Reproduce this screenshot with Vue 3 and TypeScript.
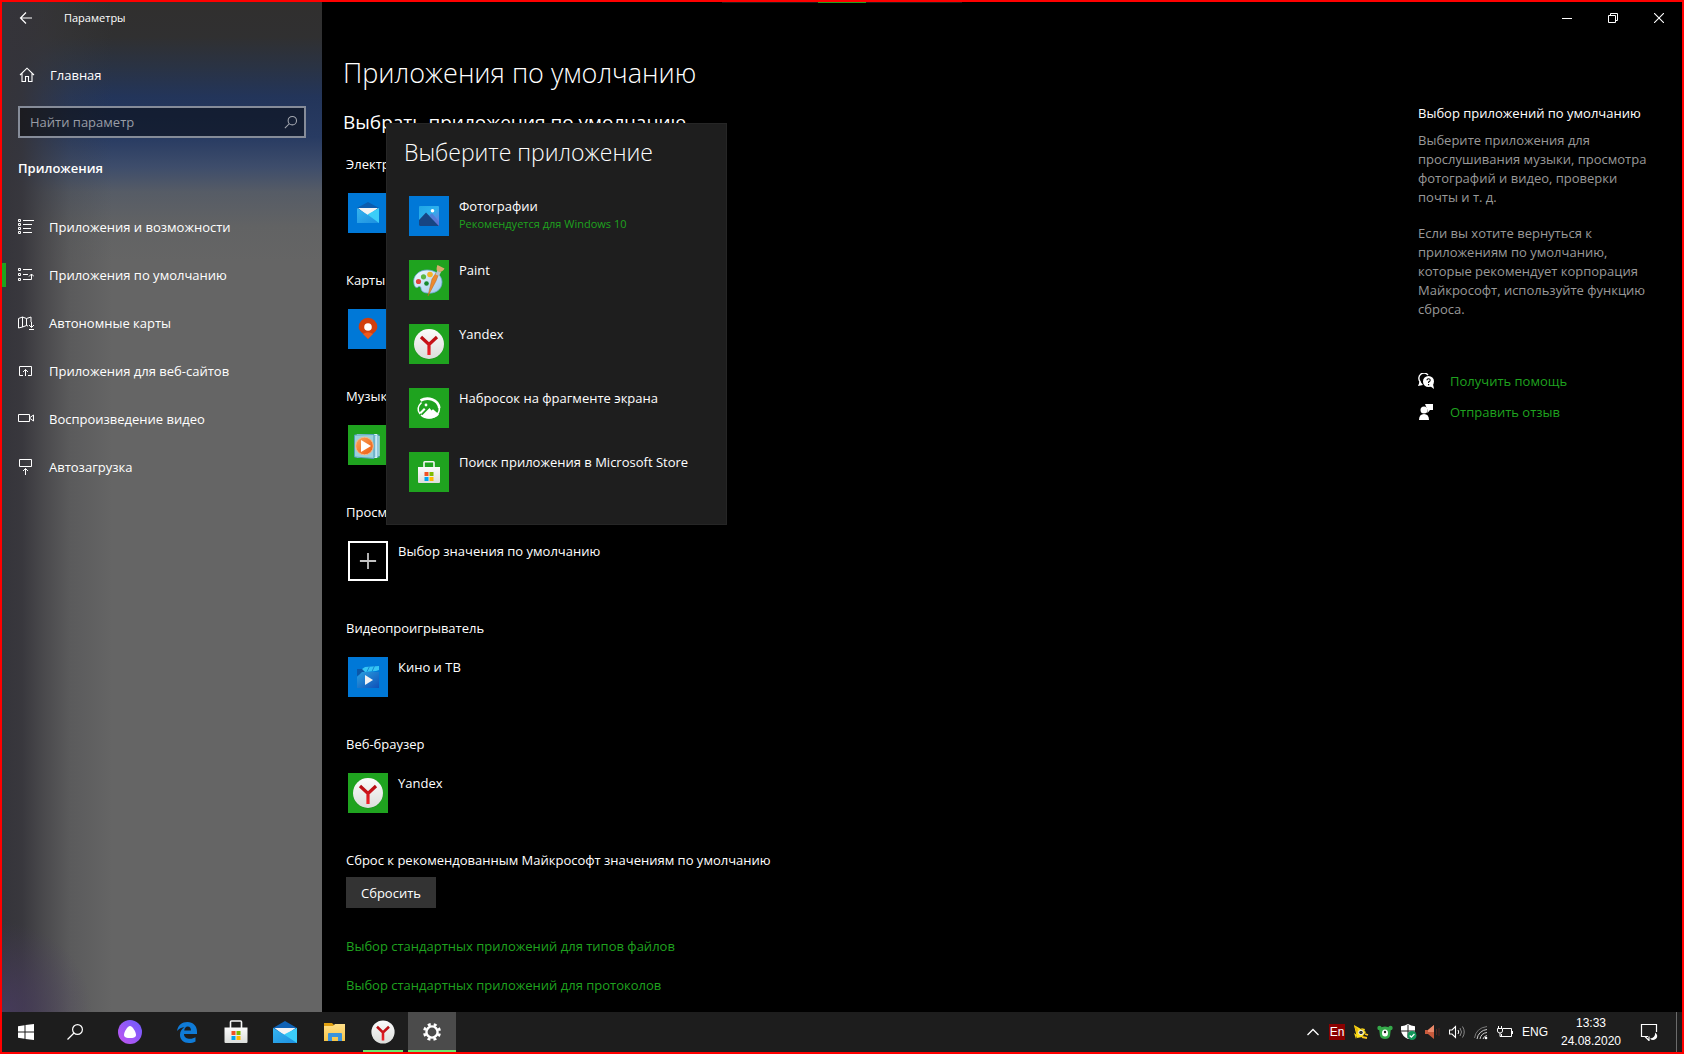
<script setup lang="ts">
import { ref } from 'vue'

interface NavItem { icon: string; label: string; active?: boolean }
interface Category { title: string; app: string; icon: string; tile: 'blue' | 'green' | 'empty' }
interface Choice { name: string; note?: string; icon: string; tile: 'blue' | 'green' }
interface Pinned { icon: string; label: string; size: number; state?: 'running' | 'active'; wide?: boolean }

const query = ref('')

const nav: NavItem[] = [
  { icon: 'n-features', label: 'Приложения и возможности' },
  { icon: 'n-defaults', label: 'Приложения по умолчанию', active: true },
  { icon: 'n-maps', label: 'Автономные карты' },
  { icon: 'n-web', label: 'Приложения для веб-сайтов' },
  { icon: 'n-video', label: 'Воспроизведение видео' },
  { icon: 'n-startup', label: 'Автозагрузка' },
]

const categories: Category[] = [
  { title: 'Электронная почта', app: 'Почта', icon: 'a-mail', tile: 'blue' },
  { title: 'Карты', app: 'Карты', icon: 'a-maps', tile: 'blue' },
  { title: 'Музыкальный проигрыватель', app: 'Windows Media', icon: 'a-wmp', tile: 'green' },
  { title: 'Просмотр фотографий', app: 'Выбор значения по умолчанию', icon: 'a-plus', tile: 'empty' },
  { title: 'Видеопроигрыватель', app: 'Кино и ТВ', icon: 'a-movies', tile: 'blue' },
  { title: 'Веб-браузер', app: 'Yandex', icon: 'a-yandex', tile: 'green' },
]

const choices: Choice[] = [
  { name: 'Фотографии', note: 'Рекомендуется для Windows 10', icon: 'a-photos', tile: 'blue' },
  { name: 'Paint', icon: 'a-paint', tile: 'green' },
  { name: 'Yandex', icon: 'a-yandex', tile: 'green' },
  { name: 'Набросок на фрагменте экрана', icon: 'a-snip', tile: 'green' },
  { name: 'Поиск приложения в Microsoft Store', icon: 'a-store', tile: 'green' },
]

const pinned: Pinned[] = [
  { icon: 't-start', label: 'Пуск', size: 16 },
  { icon: 't-search', label: 'Поиск', size: 16 },
  { icon: 't-alice', label: 'Алиса', size: 24, wide: true },
  { icon: 't-edge', label: 'Edge', size: 22 },
  { icon: 't-store', label: 'Store', size: 24 },
  { icon: 't-mail', label: 'Почта', size: 24 },
  { icon: 't-folder', label: 'Проводник', size: 24 },
  { icon: 't-yandex', label: 'Yandex', size: 24, state: 'running' },
  { icon: 't-gear', label: 'Параметры', size: 20, state: 'active' },
]

const tray = ['y-rocket', 'y-bear', 'y-shield', 'y-horn', 'y-volume', 'y-wifi', 'y-battery']
</script>

<template>
  <div class="screen">
    <svg class="sprite" aria-hidden="true">
      <defs>
        <linearGradient id="gWhite" x1="0" y1="0" x2="0" y2="1"><stop offset="0" stop-color="#fbfbfb" /><stop offset="1" stop-color="#dcdedb" /></linearGradient>
        <linearGradient id="gRed" x1="0" y1="0" x2="0" y2="1"><stop offset="0" stop-color="#b50d12" /><stop offset="1" stop-color="#f5222a" /></linearGradient>
        <linearGradient id="gAlice" x1="1" y1="0" x2="0" y2="1"><stop offset="0" stop-color="#6a5cff" /><stop offset="1" stop-color="#c455f0" /></linearGradient>
        <linearGradient id="gPhoto" x1="0" y1="0" x2="1" y2="1"><stop offset="0" stop-color="#1fa6e6" /><stop offset=".5" stop-color="#2cb0ee" /><stop offset="1" stop-color="#7a6fd8" /></linearGradient>
        <linearGradient id="gMovie" x1="0" y1="0" x2="1" y2="1"><stop offset="0" stop-color="#2aa0e0" /><stop offset="1" stop-color="#0f50b8" /></linearGradient>
        <linearGradient id="gMail" x1="0" y1="0" x2="1" y2="1"><stop offset="0" stop-color="#35b4ee" /><stop offset="1" stop-color="#1c8fe0" /></linearGradient>
        <linearGradient id="gFolder" x1="0" y1="0" x2="0" y2="1"><stop offset="0" stop-color="#ffe08a" /><stop offset="1" stop-color="#f8c546" /></linearGradient>
        <linearGradient id="gPal" x1="0" y1="0" x2="1" y2="1"><stop offset="0" stop-color="#f4fbff" /><stop offset="1" stop-color="#9cc9ec" /></linearGradient>
        <linearGradient id="gOrange" x1="0" y1="0" x2="1" y2="1"><stop offset="0" stop-color="#f9a45c" /><stop offset="1" stop-color="#ee5a0c" /></linearGradient>
      </defs>

      <!-- sidebar -->
      <symbol id="n-home" viewBox="0 0 16 16"><path d="M1 8 8 1.2 15 8M3 6.5V14.5H6.5V9.5H9.5V14.5H13V6.5" fill="none" stroke="#fff" stroke-width="1.1" /></symbol>
      <symbol id="n-features" viewBox="0 0 16 16"><g fill="none" stroke="#fff"><path d="M5 1.5H16M5 5.5H14M5 9.5H13M5 13.5H14" /><path d="M.5.5h2v2h-2zM.5 4.5h2v2h-2zM.5 8.5h2v2h-2zM.5 12.5h2v2h-2z" /></g></symbol>
      <symbol id="n-defaults" viewBox="0 0 16 16"><g fill="none" stroke="#fff"><path d="M5 2.5H14M5 7.5H10M5 12.5H13.5V7M11 9.5l2.5-2.5L16 9.5" /><path d="M.5 1.5h2v2h-2zM.5 6.5h2v2h-2zM.5 11.5h2v2h-2z" /></g></symbol>
      <symbol id="n-maps" viewBox="0 0 16 16"><path d="M10 11 8.500 10.500 4.500 12 .5 13V3.500L4.500 2 8.500 3.500 13 2V7M4.500 2V12M8.500 3.500V10.500M13.500 7V12.500M11 10l2.500 2.500L16 10M11 14.500H16" fill="none" stroke="#fff" /></symbol>
      <symbol id="n-web" viewBox="0 0 16 16"><path d="M5 12.500H1.500V3.500H13.500V12.500H10M7.500 13V6.500M5 9l2.500-2.500L10 9" fill="none" stroke="#fff" /></symbol>
      <symbol id="n-video" viewBox="0 0 16 16"><path d="M.5 3.500H11.500V10.500H.5zM12 6.500 15.500 4V10L12 7.500" fill="none" stroke="#fff" /></symbol>
      <symbol id="n-startup" viewBox="0 0 16 16"><path d="M1.500.5H13.500V7.500H1.500zM7.500 16V9.500M5 12l2.500-2.500L10 12" fill="none" stroke="#fff" /></symbol>
      <symbol id="n-search" viewBox="0 0 16 16"><circle cx="9.500" cy="6.500" r="4.800" fill="none" stroke="currentColor" stroke-width="1.200" /><path d="M6 10 1 15" stroke="currentColor" stroke-width="1.200" /></symbol>

      <!-- application tiles, drawn on a 40 unit square -->
      <symbol id="a-mail" viewBox="0 0 40 40"><path d="M9 15 20 9l11 6v4H9z" fill="#0b5cae" /><path d="M10 15h20l-10 8z" fill="#f4f4f4" /><path d="M9 15l11 7 11-7v15H9z" fill="url(#gMail)" /><path d="M31 15v15L19.500 21.500z" fill="#3bcdf8" /></symbol>
      <symbol id="a-maps" viewBox="0 0 40 40"><path d="M20 30c-3-5-9.300-7-9.300-12a9.300 9.300 0 0 1 18.600 0c0 5-6.300 7-9.300 12z" fill="#d13f0d" /><path d="M15 25a9 9 0 0 1 10 0l-5 5z" fill="#f0591d" /><circle cx="20" cy="18" r="3.800" fill="#fff" /></symbol>
      <symbol id="a-wmp" viewBox="0 0 40 40"><path d="M12 9.500h19.500v23H12z" fill="#4d9dba" /><path d="M9 9.500h20v23H9z" fill="#8cc7de" stroke="#d4f0fa" /><path d="M6.500 10 26 9.500v24L6.500 32z" fill="#9bd0da" stroke="#4f9fb8" /><path d="M28 11v21M31 11v20" stroke="#dff5fb" /><circle cx="16.500" cy="21" r="8.800" fill="url(#gOrange)" stroke="#f5b88a" /><path d="M13 15v12l10-6z" fill="#fff" /></symbol>
      <symbol id="a-plus" viewBox="0 0 40 40"><path d="M20 11V29M11 20H29" stroke="#c4c4c4" stroke-width="2" /></symbol>
      <symbol id="a-movies" viewBox="0 0 40 40"><path d="M9 12h5l3-1.500V16l-8 3z" fill="#0b57a8" /><path d="M14 12l3-2 14-1v4l-3 1-11 1z" fill="#35c5f4" /><path d="M21.500 9.500l-2.500 5M26.500 9l-2.500 5.500" stroke="#1787d0" /><path d="M9 31V20l5-5h17v16z" fill="url(#gMovie)" /><path d="M17 18v10l8-5z" fill="#f2f2f2" /></symbol>
      <symbol id="a-yandex" viewBox="0 0 40 40"><circle cx="20" cy="20.500" r="15" fill="#157a15" opacity=".5" /><circle cx="20" cy="20" r="15" fill="url(#gWhite)" /><path d="M12 13l8 7.500 8-7.500M20 20v11" fill="none" stroke="url(#gRed)" stroke-width="3.200" /></symbol>
      <symbol id="a-photos" viewBox="0 0 40 40"><rect x="10" y="10" width="20" height="20" rx="1" fill="url(#gPhoto)" /><path d="M10 24l7-7.500 13 13.500H11q-1 0-1-1z" fill="#174583" /><path d="M20 19.500 23 17l7 9v4z" fill="#5b6dd0" opacity=".7" /><circle cx="23.500" cy="14.800" r="1.800" fill="#fff" /></symbol>
      <symbol id="a-paint" viewBox="0 0 40 40"><path d="M5 24C3 16 10 10 18 10c9 0 15 6 15 12 0 8-7 12-15 11-5-.6-6-3-6-5 0-1.500-2-2-3-1-1.500 1.500-3.500 0-4-3z" fill="url(#gPal)" stroke="#6fa7d4" stroke-width=".8" /><circle cx="9.500" cy="21.500" r="2.600" fill="#e0463e" /><circle cx="14.500" cy="16.800" r="2.600" fill="#5cb845" /><circle cx="21" cy="14.500" r="2.800" fill="#f4b42a" /><circle cx="17.500" cy="23.500" r="2.300" fill="#16892d" /><path d="M29.500 14.500 27 21 19 36 23 19l4-6z" fill="#ec8a2e" stroke="#b86518" stroke-width=".5" /><path d="M26.500 14.500l3.500 1.500 2-4-3.500-2z" fill="#b9c4cc" /><path d="M28 11c-1-2 0-5 .5-6l7 3.500c-1 2-3 3.500-5 3.500z" fill="#d9ab6e" /></symbol>
      <symbol id="a-snip" viewBox="0 0 40 40"><path d="M11.500 12.500C19 8.500 29 11.500 30.300 20" fill="none" stroke="#fff" stroke-width="2.600" /><path d="M12.500 14.500C8 19 8.500 23 11 26M30.300 19c.8 5-3 11-10.300 11-3 0-6-1-8-3" fill="none" stroke="#fff" stroke-width="1.500" /><path d="M13 27.500 20.500 20l2 2.500 1.500-1.200 6 5.200c-2 2.500-5.500 4-10 4-3 0-5.500-1-7-3z" fill="#fff" /><path d="M10.500 24.500l4.500-4.500 1.500 1.500-4.500 4.500z" fill="#fff" /><circle cx="17" cy="17" r="1.400" fill="#fff" /></symbol>
      <symbol id="a-store" viewBox="0 0 40 40"><path d="M15 15v-4.500q0-.8.8-.8h8.400q.8 0 .8.8V15" fill="none" stroke="#f5f5f5" stroke-width="1.600" /><path d="M9 15H31V30q0 1-1 1H10q-1 0-1-1z" fill="url(#gWhite)" /><path d="M15.500 20h4v4h-4z" fill="#f25022" /><path d="M20.500 20h4v4h-4z" fill="#7fba00" /><path d="M15.500 25h4v4h-4z" fill="#00a4ef" /><path d="M20.500 25h4v4h-4z" fill="#ffb900" /></symbol>

      <!-- help links -->
      <symbol id="h-help" viewBox="0 0 16 16"><path d="M2 12V8.500a5 5 0 0 1 8-6.500" fill="none" stroke="#fff" stroke-width="1.400" /><path d="M0 13 2 8l3 4z" fill="#fff" /><circle cx="10.500" cy="8.500" r="5.500" fill="#fff" /><path d="M12 13l3-2 1 5z" fill="#fff" /><path d="M9 7.300q0-1.600 1.600-1.600T12.200 7.200q0 1-1.600 1.900V10M10.600 11v1.200" fill="none" stroke="#000" stroke-width="1.100" /></symbol>
      <symbol id="h-feedback" viewBox="0 0 16 16"><circle cx="6" cy="6" r="3.500" fill="#fff" /><path d="M1 16q0-6 5-6t5 6zM7 0h8v6h-3l-2.500 3V6z" fill="#fff" /></symbol>

      <!-- taskbar -->
      <symbol id="t-start" viewBox="0 0 16 16"><path d="M0 2.200 6.500 1.300V7.500H0zM7.500 1.100 16 0V7.500H7.500zM0 8.500H6.500V14.700L0 13.800zM7.500 8.500H16V16L7.500 14.900z" fill="#fff" /></symbol>
      <symbol id="t-search" viewBox="0 0 16 16"><circle cx="10.500" cy="5.500" r="4.900" fill="none" stroke="#fff" stroke-width="1.200" /><path d="M7 9 .5 15.500" stroke="#fff" stroke-width="1.300" /></symbol>
      <symbol id="t-alice" viewBox="0 0 24 24"><circle cx="12" cy="12" r="12" fill="url(#gAlice)" /><path d="M12 6c2.500 0 6 6 6 9 0 2.500-3 3-6 3s-6-.5-6-3c0-3 3.500-9 6-9z" fill="#fff" /></symbol>
      <symbol id="t-edge" viewBox="0 0 22 22"><path d="M1 10C2 4 6 1 11.500 1 17 1 21 5 21 10.500V13H8c0 3.500 3 4.800 6 4.800 2.200 0 4-.6 5.500-1.500v4.200C17.500 21.500 15.500 22 13 22 7.500 22 4 18.500 4 14c0-4 2-6.500 4.500-7.800C5.500 6.500 3 7.500 1 10zM8.200 9.500H15c0-2.200-1-4-3.300-4-2 0-3.200 1.700-3.500 4z" fill="#0f7bd7" /></symbol>
      <symbol id="t-store" viewBox="0 0 24 24"><path d="M6.500 8V2q0-1 1-1h9q1 0 1 1V8" fill="none" stroke="#f5f5f5" stroke-width="1.600" /><path d="M.5 7.500h23V22q0 1-1 1h-21q-1 0-1-1z" fill="url(#gWhite)" /><path d="M7.500 11h4v4h-4z" fill="#f25022" /><path d="M12.500 11h4v4h-4z" fill="#7fba00" /><path d="M7.500 16h4v4h-4z" fill="#00a4ef" /><path d="M12.500 16h4v4h-4z" fill="#ffb900" /></symbol>
      <symbol id="t-mail" viewBox="0 0 24 24"><path d="M0 8 12 1l12 7v5H0z" fill="#0f62b5" /><path d="M1.500 8h21L12 16z" fill="#f4f4f4" /><path d="M0 8l12 7 12-7v15H0z" fill="url(#gMail)" /><path d="M24 8v15L11 14.500z" fill="#3bcdf8" /></symbol>
      <symbol id="t-folder" viewBox="0 0 24 24"><path d="M2 3h8l2 2h11v6H2z" fill="#e0a010" /><path d="M2 6h9l2-2h10v17H2z" fill="url(#gFolder)" /><path d="M6 21v-7q0-1 1-1h12q1 0 1 1v7h-4v-4h-6v4z" fill="#3b93dc" /></symbol>
      <symbol id="t-yandex" viewBox="0 0 30 30"><circle cx="15" cy="15" r="14.500" fill="url(#gWhite)" /><path d="M7.500 8.500l7.500 7 7.500-7M15 15v10.500" fill="none" stroke="url(#gRed)" stroke-width="3.200" /></symbol>
      <symbol id="t-gear" viewBox="0 0 20 20"><circle cx="10" cy="10" r="5.600" fill="none" stroke="#fff" stroke-width="2.400" /><circle cx="10" cy="10" r="7.700" fill="none" stroke="#fff" stroke-width="2.600" stroke-dasharray="3 3.048" stroke-dashoffset="-1.500" /></symbol>

      <!-- notification area -->
      <symbol id="y-rocket" viewBox="0 0 16 16"><path d="M1 1l7 4 5 3-4 5-5 1z" fill="#ffe01a" /><path d="M1 1l3 9 1-5z" fill="#e8b80c" /><circle cx="8" cy="8.500" r="2.300" fill="#333" stroke="#fff" /><path d="M1 9l3 2-1 4zM8 4l4 1-1 3z" fill="#ffd91a" /><path d="M9 13l5 1M12 10l3 1" stroke="#ffc61e" stroke-width="1.800" /></symbol>
      <symbol id="y-bear" viewBox="0 0 16 16"><circle cx="2.500" cy="4" r="2.200" fill="#35a94a" /><circle cx="13.500" cy="4" r="2.200" fill="#35a94a" /><path d="M2 4q6-3 12 0l-1 8q-1 3-5 3t-5-3z" fill="#35a94a" /><ellipse cx="8" cy="9" rx="3" ry="3.500" fill="#fff" /><circle cx="8" cy="8" r="1.200" fill="#222" /></symbol>
      <symbol id="y-shield" viewBox="0 0 16 16"><path d="M7 0Q10 2 14 2.300V7Q13 12 7 15 1 12 0 7V2.300Q4 2 7 0z" fill="#fff" /><path d="M7 1V14M0 7H14" stroke="#1d1d1d" /><circle cx="11" cy="11.500" r="4.500" fill="#12965a" /><path d="M8.700 11.500l1.700 1.700 3-3.200" fill="none" stroke="#fff" stroke-width="1.200" /></symbol>
      <symbol id="y-horn" viewBox="0 0 16 16"><path d="M0 6h3l6-5v14l-6-5H0z" fill="#c85a3c" /><path d="M3 6l6-5v7H3z" fill="#e9896a" /><path d="M11.500 5v6M14 4v8" stroke="#4c2722" /></symbol>
      <symbol id="y-volume" viewBox="0 0 16 16"><path d="M.5 6H3L6.500 2.500V13.500L3 10H.5z" fill="none" stroke="#fff" stroke-width="1.100" /><path d="M9 6q1.500 2 0 4" fill="none" stroke="#fff" /><path d="M11 4q3 4 0 8M13.500 2.500q3.500 5.500 0 11" fill="none" stroke="#888" /></symbol>
      <symbol id="y-wifi" viewBox="0 0 16 16"><g fill="none" stroke="#cfcfcf"><path d="M4 15A11 11 0 0 1 14 5.500M7 15A8 8 0 0 1 14 8.500M10 15A5 5 0 0 1 14 11.500" /></g><path d="M1.500 14Q3 4 14 2.500" fill="none" stroke="#777" /><circle cx="13" cy="14" r="1.300" fill="#fff" /></symbol>
      <symbol id="y-battery" viewBox="0 0 16 16"><path d="M6 4.500H14.500V12.500H4.500V10M15.500 7V10" fill="none" stroke="#fff" /><path d="M.5 4.500h5V7q0 2-2.500 2T.5 7zM1.500 2v2M4.500 2v2M3 9v3.500h2" fill="none" stroke="#fff" /></symbol>
      <symbol id="y-note" viewBox="0 0 18 18"><path d="M8 13.500H1.500V1.500H16.500V9M5 13.500 9 17.500V13.500" fill="none" stroke="#fff" stroke-width="1.200" /><path d="M15 9.500a4 4 0 1 1-5 6A5 5 0 0 0 15 9.500z" fill="#fff" /></symbol>
    </svg>

    <div class="bar-edge" aria-hidden="true"><i></i></div>

    <div class="window">
      <aside class="sidebar">
        <header class="side-title">
          <button class="back" type="button" aria-label="Назад">
            <svg width="14" height="14" viewBox="0 0 14 14"><path d="M13 7H1.500M7 1.500 1.500 7 7 12.500" fill="none" stroke="#fff" stroke-width="1.200" /></svg>
          </button>
          <span>Параметры</span>
        </header>
        <a class="home" href="#"><svg width="16" height="16"><use href="#n-home" /></svg>Главная</a>
        <div class="search">
          <input v-model="query" type="text" placeholder="Найти параметр" aria-label="Найти параметр" />
          <svg width="14" height="14"><use href="#n-search" /></svg>
        </div>
        <h2 class="side-heading">Приложения</h2>
        <nav>
          <a v-for="item in nav" :key="item.icon" href="#" :class="{ active: item.active }">
            <svg width="16" height="16"><use :href="'#' + item.icon" /></svg>{{ item.label }}
          </a>
        </nav>
      </aside>

      <main class="main">
        <div class="controls">
          <button type="button" aria-label="Свернуть"><svg width="10" height="10"><path d="M0 5.500H10" stroke="#fff" /></svg></button>
          <button type="button" aria-label="Развернуть"><svg width="10" height="10"><path d="M.5 2.500h7v7h-7zM2.500 2.500v-2h7v7h-2" fill="none" stroke="#fff" /></svg></button>
          <button type="button" aria-label="Закрыть"><svg width="10" height="10"><path d="M0 0l10 10M10 0L0 10" stroke="#fff" stroke-width="1.100" /></svg></button>
        </div>

        <div class="columns">
          <section class="content">
            <h1>Приложения по умолчанию</h1>
            <h2>Выбрать приложения по умолчанию</h2>
            <div class="list">
              <div v-for="c in categories" :key="c.title" class="category">
                <h3>{{ c.title }}</h3>
                <button class="app" type="button">
                  <svg class="tile" :class="c.tile" width="40" height="40"><use :href="'#' + c.icon" /></svg>
                  <span>{{ c.app }}</span>
                </button>
              </div>
              <h3>Сброс к рекомендованным Майкрософт значениям по умолчанию</h3>
              <button class="reset" type="button">Сбросить</button>
              <a class="more" href="#">Выбор стандартных приложений для типов файлов</a>
              <a class="more" href="#">Выбор стандартных приложений для протоколов</a>
            </div>
          </section>

          <aside class="help">
            <h3>Выбор приложений по умолчанию</h3>
            <p>Выберите приложения для прослушивания музыки, просмотра фотографий и видео, проверки почты и т. д.</p>
            <p>Если вы хотите вернуться к приложениям по умолчанию, которые рекомендует корпорация Майкрософт, используйте функцию сброса.</p>
            <div class="help-links">
              <a href="#"><svg width="16" height="16"><use href="#h-help" /></svg>Получить помощь</a>
              <a href="#"><svg width="16" height="16"><use href="#h-feedback" /></svg>Отправить отзыв</a>
            </div>
          </aside>
        </div>

        <div class="picker" role="dialog" aria-labelledby="picker-title">
          <h2 id="picker-title">Выберите приложение</h2>
          <button v-for="c in choices" :key="c.name" class="choice" type="button">
            <svg class="tile" :class="c.tile" width="40" height="40"><use :href="'#' + c.icon" /></svg>
            <span class="choice-text"><span>{{ c.name }}</span><small v-if="c.note">{{ c.note }}</small></span>
          </button>
        </div>
      </main>
    </div>

    <footer class="taskbar">
      <div class="pinned">
        <button v-for="p in pinned" :key="p.icon" type="button" :aria-label="p.label" :class="[p.state, { wide: p.wide }]">
          <svg :width="p.size" :height="p.size"><use :href="'#' + p.icon" /></svg>
        </button>
      </div>
      <div class="tray">
        <span class="slot"><svg width="12" height="8"><path d="M.5 7 6 1.500 11.500 7" fill="none" stroke="#fff" stroke-width="1.300" /></svg></span>
        <span class="slot"><b class="lang-badge">En</b></span>
        <span v-for="t in tray" :key="t" class="slot"><svg width="16" height="16"><use :href="'#' + t" /></svg></span>
        <span class="lang">ENG</span>
        <time class="clock" datetime="2020-08-24T13:33"><span>13:33</span><span>24.08.2020</span></time>
        <button class="notes" type="button" aria-label="Уведомления"><svg width="18" height="18"><use href="#y-note" /></svg></button>
        <button class="desktop" type="button" aria-label="Свернуть все окна"></button>
      </div>
    </footer>
  </div>
</template>

<style>
body { background: #000; }
</style>

<style scoped>
* { box-sizing: border-box; margin: 0; padding: 0; }
.screen {
  position: relative;
  display: flex;
  flex-direction: column;
  min-height: 100vh;
  border: 2px solid #f00;
  background: #000;
  color: #fff;
  font: 13px/20px "Open Sans", "Noto Sans", sans-serif;
}
.sprite { position: absolute; width: 0; height: 0; }
.bar-edge { position: absolute; top: 0; left: 50%; width: 240px; height: 1px; margin-left: -120px; background: #1c1c1c; }
.bar-edge i { display: block; width: 48px; height: 1px; margin: 0 auto; background: #1fa31f; }
button { border: 0; background: none; color: inherit; font: inherit; text-align: left; }
a { color: inherit; text-decoration: none; }
svg { display: block; flex: none; }
h1, h2, h3 { font-weight: 400; }

.window { display: flex; flex: 1; }
.sidebar {
  flex: none;
  width: 320px;
  background:
    radial-gradient(90px 90px at 0 100%, rgba(74, 60, 98, .8), transparent),
    linear-gradient(to right, #35343a 0, rgba(53, 52, 58, .92) 20px, rgba(56, 55, 60, .6) 42px, rgba(60, 60, 64, .25) 68px, transparent 110px),
    linear-gradient(to bottom, #302f2e 0, #303031 35px, #2a3344 65px, #23355a 95px, #283b62 135px, #3e4d6b 165px, #565c66 190px, #626364 225px, #656565 260px);
}
.side-title { display: flex; align-items: center; height: 32px; font-size: 11px; }
.back { display: flex; justify-content: center; width: 48px; margin-right: 14px; }
.home { display: flex; align-items: center; gap: 15px; height: 40px; margin-top: 21px; padding-left: 17px; }
.search {
  display: flex;
  align-items: center;
  height: 32px;
  margin: 11px 16px 0;
  padding-right: 6px;
  border: 2px solid #868c99;
  background: rgba(0, 0, 0, .45);
  color: #a5a9b1;
}
.search input { flex: 1; min-width: 0; padding-left: 10px; border: 0; outline: 0; background: none; color: #fff; font: inherit; }
.search input::placeholder { color: #999da6; opacity: 1; }
.side-heading { margin: 20px 16px 0; font-size: 13px; font-weight: 600; line-height: 20px; }
nav { margin-top: 25px; }
nav a { display: flex; align-items: center; gap: 15px; height: 48px; padding-left: 16px; position: relative; }
nav a.active::before { content: ""; position: absolute; left: 0; top: 12px; width: 4px; height: 24px; background: #1fa31f; }

.main { position: relative; flex: 1; min-width: 0; }
.controls { display: flex; justify-content: flex-end; height: 32px; }
.controls button { display: flex; align-items: center; justify-content: center; width: 46px; }
.columns { display: flex; justify-content: space-between; }
.content { padding: 19px 0 16px 21px; }
h1 { font-size: 27px; font-weight: 300; line-height: 40px; }
.content h2 { margin-top: 15px; font-size: 19px; line-height: 28px; }
.list { display: flex; flex-direction: column; align-items: flex-start; margin-top: 18px; padding-left: 3px; }
.list h3 { font-size: 13px; line-height: 20px; }
.category { padding-bottom: 37px; }
.app { display: flex; gap: 10px; margin: 19px 0 0 2px; }
.tile.blue { background: #0078d7; }
.tile.green { background: #1fa31f; }
.tile.empty { border: 2px solid #fff; }
.reset { height: 31px; margin: 7px 0 9px; padding: 0 15px; background: #333; }
.more { margin-top: 19px; color: #1fa31f; }

.help { flex: none; width: 264px; padding: 69px 24px 0 0; }
.help h3 { font-size: 13px; line-height: 20px; white-space: nowrap; }
.help p { margin-top: 8px; color: #999; line-height: 19px; }
.help p + p { margin-top: 17px; }
.help-links { display: flex; flex-direction: column; gap: 11px; margin-top: 52px; }
.help-links a { display: flex; align-items: center; gap: 16px; color: #1fa31f; }

.picker {
  position: absolute;
  left: 64px;
  top: 121px;
  width: 341px;
  padding: 12px 0 32px;
  border: 1px solid #262626;
  background: #1e1e1e;
}
.picker h2 { padding-left: 17px; margin-bottom: 28px; font-size: 23px; font-weight: 300; line-height: 32px; }
.choice { display: flex; gap: 10px; width: 100%; height: 40px; margin-bottom: 24px; padding-left: 22px; }
.choice:last-child { margin-bottom: 0; }
.choice-text { display: flex; flex-direction: column; }
.choice-text small { font-size: 11px; line-height: 16px; color: #1fa31f; }

.taskbar { display: flex; justify-content: space-between; height: 40px; background: #1d1d1d; }
.pinned { display: flex; gap: 1px; }
.pinned button { display: flex; align-items: center; justify-content: center; width: 48px; height: 40px; }
.pinned .wide { margin: 0 8px 0 6px; }
.running { background: linear-gradient(#6be86b, #6be86b) center bottom / 40px 2px no-repeat; }
.active:is(button) { background: linear-gradient(#6be86b, #6be86b) center bottom / 48px 2px no-repeat #4b4b4b; }
.tray { display: flex; align-items: center; font: 12px/18px "Liberation Sans", sans-serif; }
.slot { display: flex; align-items: center; justify-content: center; width: 24px; }
.lang-badge { width: 16px; height: 16px; background: #8a0000; font-weight: 400; line-height: 16px; text-align: center; }
.lang { padding-left: 5px; }
.clock { display: flex; flex-direction: column; width: 86px; text-align: center; }
.notes { display: flex; justify-content: center; width: 30px; }
.desktop { width: 6px; height: 40px; margin-left: 12px; border-left: 1px solid #6b6b6b; }
</style>
